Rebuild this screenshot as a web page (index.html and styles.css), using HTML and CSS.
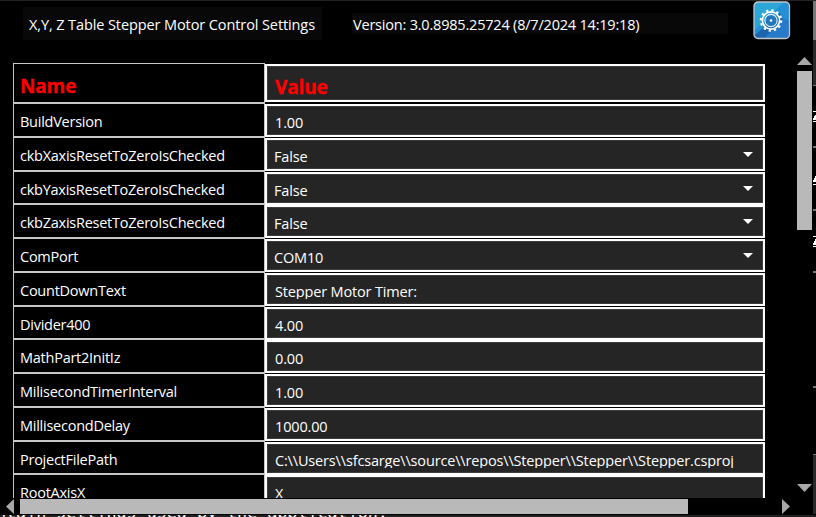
FILE: index.html
```
<!DOCTYPE html>
<html lang="en">
<head>
<meta charset="utf-8">
<title>Stepper Motor Control Settings</title>
<link rel="stylesheet" href="styles.css">
</head>
<body>
<div class="desktop">
  <div class="editor-top"></div>
  <main class="window">
    <header class="titlebar">
      <h1 class="title">X,Y, Z Table Stepper Motor Control Settings</h1>
      <p class="version">Version: 3.0.8985.25724 (8/7/2024 14:19:18)</p>
      <button class="gear" aria-label="Settings">
        <svg viewBox="0 0 38 39" width="38" height="39">
          <defs><clipPath id="tile"><rect x="1" y="1" width="35.500" height="36.500" rx="4"/></clipPath></defs>
          <g clip-path="url(#tile)">
            <path fill="#2591d4" d="M0 0h38v39H0z"/>
            <path fill="#2ba6d6" d="M0 0h32L0 31z"/>
            <path fill="#1c65ac" d="M1 35 11 26l16-14 3 7-19 19H1z"/>
            <path fill="#2779c9" d="M30 17l7 3v18H11z"/>
          </g>
          <rect x="1" y="1" width="35.500" height="36.500" rx="4" fill="none" stroke="#c3c5cb" stroke-width="1.300"/>
          <circle cx="18" cy="19.500" r="10.200" fill="none" stroke="#fff" stroke-width="2.200" stroke-dasharray="2.300 3.041"/>
          <circle cx="18" cy="19.500" r="8.600" fill="none" stroke="#fff" stroke-width="1.600"/>
          <circle cx="18" cy="19.500" r="6.100" fill="#2476bd" stroke="#e8f4ff" stroke-width="1.100"/>
          <circle cx="18" cy="19.500" r="1.300" fill="#fff"/>
        </svg>
      </button>
    </header>
    <div class="viewport">
      <div class="table">
        <div class="row head"><div class="name"><span>Name</span></div><div class="value"><span>Value</span></div></div>
        <div class="row"><div class="name"><span>BuildVersion</span></div><div class="value"><span>1.00</span></div></div>
        <div class="row select"><div class="name"><span>ckbXaxisResetToZeroIsChecked</span></div><div class="value"><span>False</span><i class="arrow"></i></div></div>
        <div class="row select"><div class="name"><span>ckbYaxisResetToZeroIsChecked</span></div><div class="value"><span>False</span><i class="arrow"></i></div></div>
        <div class="row select"><div class="name"><span>ckbZaxisResetToZeroIsChecked</span></div><div class="value"><span>False</span><i class="arrow"></i></div></div>
        <div class="row select"><div class="name"><span>ComPort</span></div><div class="value"><span>COM10</span><i class="arrow"></i></div></div>
        <div class="row"><div class="name"><span>CountDownText</span></div><div class="value"><span class="cut">Stepper Motor Timer:</span></div></div>
        <div class="row"><div class="name"><span>Divider400</span></div><div class="value"><span>4.00</span></div></div>
        <div class="row"><div class="name"><span>MathPart2InitIz</span></div><div class="value"><span>0.00</span></div></div>
        <div class="row"><div class="name"><span>MilisecondTimerInterval</span></div><div class="value"><span>1.00</span></div></div>
        <div class="row"><div class="name"><span>MillisecondDelay</span></div><div class="value"><span>1000.00</span></div></div>
        <div class="row"><div class="name"><span>ProjectFilePath</span></div><div class="value"><span class="cut">C:\\Users\\sfcsarge\\source\\repos\\Stepper\\Stepper\\Stepper.csproj</span></div></div>
        <div class="row"><div class="name"><span>RootAxisX</span></div><div class="value"><span>X</span></div></div>
      </div>
      <div class="vbar"><i class="up"></i><i class="vthumb"></i><i class="down"></i></div>
    </div>
    <div class="hbar"><i class="left"></i><i class="hthumb"></i><i class="right"></i></div>
  </main>
  <aside class="editor-side"></aside>
  <div class="editor-bottom"><span>ntain settings used by the application.</span></div>
</div>
</body>
</html>
```

FILE: styles.css
```
* { box-sizing: border-box; }
body { margin: 0; background: #000; color: #fff; font: 14.5px/20px "Open Sans", "Noto Sans", sans-serif; }
.desktop { width: 816px; height: 517px; overflow: hidden; display: grid; grid-template: 1px 513px 3px / 813px 3px; background: #000; }
.editor-top { grid-column: 1 / 3; background: #222; }
.window { display: flex; flex-direction: column; min-height: 0; }
.titlebar { display: flex; flex: none; height: 56px; padding-left: 23px; }
.title { flex: none; margin: 6px 0 0; width: 299px; height: 33px; padding: 8px 0 0 6px; background: #080808; font-size: 14.5px; font-weight: 400; letter-spacing: -0.1px; white-space: nowrap; }
.version { flex: none; margin: 12px 0 0 30px; width: 376px; height: 21px; padding: 2px 0 0 1px; background: #080808; letter-spacing: -0.2px; white-space: nowrap; }
.gear { display: block; flex: none; margin: 0 0 0 25px; padding: 0; border: 0; background: none; width: 38px; height: 39px; }
.viewport { display: flex; flex: none; justify-content: space-between; height: 441px; padding-left: 13px; }
.table { width: 752px; margin-top: 6px; height: 435px; overflow: hidden; }
.row { display: flex; height: 33.75px; }
.name { width: 252px; border: 1px solid #c6c6c6; padding: 8px 0 0 6px; letter-spacing: -0.25px; white-space: nowrap; }
.value { position: relative; width: 500px; height: 33px; margin-top: 1px; border: 2px solid #fff; background: #252525; padding: 7px 0 0 8px; letter-spacing: -0.16px; white-space: nowrap; box-shadow: inset 0 0 0 1px #3c3c3c; }
.value span { display: block; }
.value .cut { height: 17px; overflow: hidden; }
.row.head { height: 40px; color: #f00; font-weight: 700; }
.head .name, .head .value { font-size: 19px; letter-spacing: -0.15px; -webkit-text-stroke: 0.3px #f00; }
.head .name { padding-top: 12px; }
.head .value { height: 38px; padding-top: 11px; }
.select .value { padding-left: 7px; }
.arrow { position: absolute; right: 10px; top: 12px; border: 5px solid transparent; border-top-color: #fff; border-bottom: 0; }
.vbar { width: 16px; display: flex; flex-direction: column; height: 441px; }
.vthumb { flex: none; height: 159px; width: 15px; background: #b9b9b9; margin-top: 6px; }
.up, .down { flex: none; width: 15px; height: 8px; background: #a8a8a8; }
.up { clip-path: polygon(50% 0, 100% 100%, 0 100%); }
.down { clip-path: polygon(0 0, 100% 0, 50% 100%); margin-top: auto; margin-bottom: 6px; }
.hbar { display: flex; flex: none; height: 16px; padding: 1px 0 0 6px; }
.left { width: 8px; height: 15px; background: #a8a8a8; clip-path: polygon(100% 0, 100% 100%, 0 50%); }
.hthumb { width: 668px; height: 15px; margin-left: 6px; background: #b9b9b9; }
.right { width: 8px; height: 15px; margin-left: 94px; background: #a8a8a8; clip-path: polygon(0 0, 100% 50%, 0 100%); }
.editor-side {
  background:
    linear-gradient(#777, #777) 0 0 / 3px 39px,
    linear-gradient(#292929, #292929) 0 39px / 3px 45px,
    linear-gradient(#777, #777) 0 84px / 3px 1px,
    linear-gradient(#fff, #fff) 0 110px / 3px 1px,
    linear-gradient(120deg, #000 45%, #fff 45%) 0 113px / 3px 6px,
    linear-gradient(#fff, #fff) 0 120px / 3px 1px,
    linear-gradient(#777, #777) 0 145px / 3px 2px,
    linear-gradient(120deg, #000 45%, #fff 45%) 0 174px / 3px 7px,
    linear-gradient(#fff, #fff) 0 183px / 3px 1px,
    linear-gradient(#777, #777) 0 208px / 3px 2px,
    linear-gradient(#fff, #fff) 0 235px / 3px 1px,
    linear-gradient(120deg, #000 45%, #fff 45%) 0 237px / 3px 7px,
    linear-gradient(#fff, #fff) 0 245px / 3px 1px,
    linear-gradient(#777, #777) 0 270px / 3px 2px,
    linear-gradient(#777, #777) 0 385px / 3px 2px,
    linear-gradient(#777, #777) 0 453px / 3px 1px,
    linear-gradient(#292929, #292929) 0 454px / 3px 60px,
    #000;
  background-repeat: no-repeat;
}
.editor-bottom { grid-column: 1 / 3; display: flex; align-items: flex-end; background: #1f1f1f; border-top: 1px solid #000; overflow: hidden; height: 3px; }
.editor-bottom span { font: 16.7px/20px "DejaVu Sans Mono", monospace; margin: 0 0 -5px -4px; white-space: pre; }
```
